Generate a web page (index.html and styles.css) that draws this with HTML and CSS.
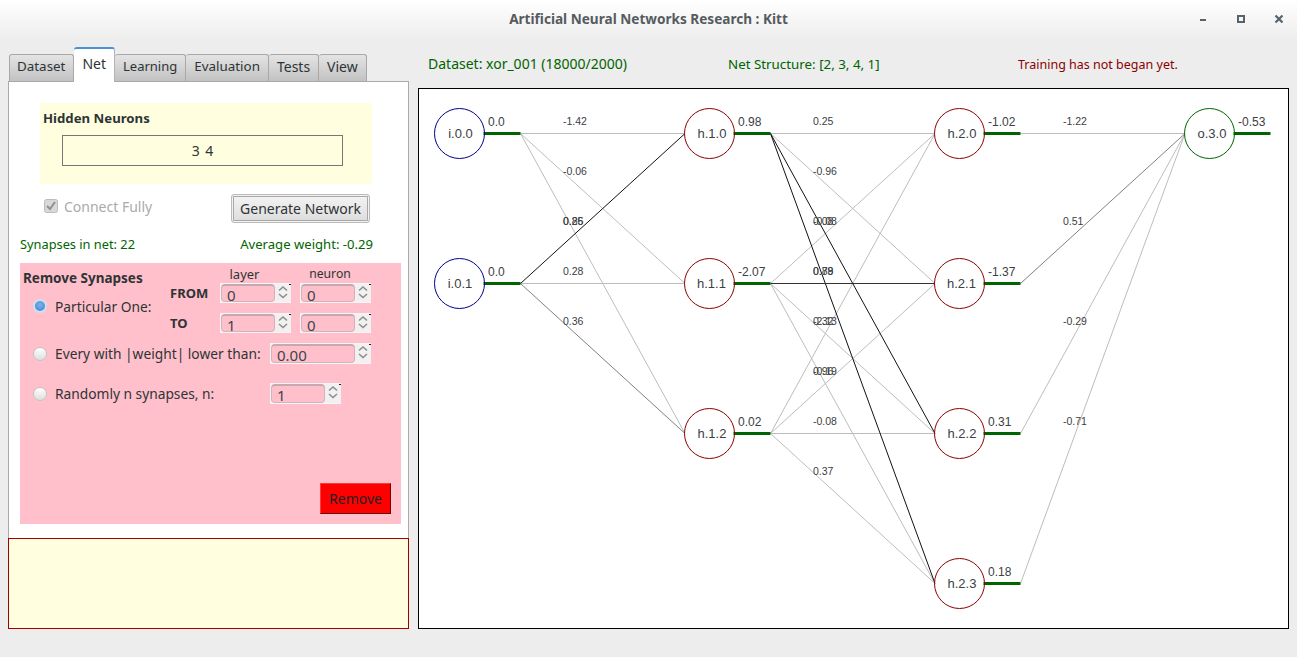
FILE: index.html
```html
<!DOCTYPE html>
<html>
<head>
  <title>Artificial Neural Networks Research : Kitt</title>
  <link rel="stylesheet" href="styles.css">
</head>
<body>

  <header class="titlebar">
    <span></span>
    <h1>Artificial Neural Networks Research : Kitt</h1>
    <div class="winbtns">
      <svg width="8" height="8" viewBox="0 0 8 8"><rect x="0" y="5" width="6" height="2"/></svg>
      <svg width="10" height="10" viewBox="0 0 10 10"><path d="M1 1h8v8H1z M3 3v4h4V3z" fill-rule="evenodd"/></svg>
      <svg width="10" height="10" viewBox="0 0 10 10"><path d="M1.5 1.5l7 7M8.5 1.5l-7 7" stroke-width="2.2" class="x"/></svg>
    </div>
  </header>

  <main class="main">
    <section class="leftcol">
      <nav class="tabs">
        <div class="tab tab-dataset">Dataset</div>
        <div class="tab active">Net</div>
        <div class="tab tab-learning">Learning</div>
        <div class="tab tab-eval">Evaluation</div>
        <div class="tab">Tests</div>
        <div class="tab">View</div>
      </nav>

      <div class="pane">
        <div class="hidden-box">
          <div class="hidden-title">Hidden Neurons</div>
          <div class="hidden-input">3 4</div>
        </div>

        <div class="gen-row">
          <div class="check">
            <svg width="14" height="14" viewBox="0 0 14 14"><rect x="0.5" y="0.5" width="13" height="13" rx="2" fill="#d8d8d8" stroke="#bbb"/><path d="M3 7l3 3 5-7" fill="none" stroke="#8f8f8f" stroke-width="2"/></svg>
            <span>Connect Fully</span>
          </div>
          <button class="gen-btn">Generate Network</button>
        </div>

        <div class="stats-row">
          <span>Synapses in net: 22</span>
          <span class="avg">Average weight: -0.29</span>
        </div>

        <div class="remove-box">
          <div class="particular">
            <div class="remove-title">Remove Synapses</div>
            <div class="colhead hd-layer">layer</div>
            <div class="colhead hd-neuron">neuron</div>
            <label class="opt opt-one"><span class="radio on"></span>Particular One:</label>
            <div class="fromto">FROM</div>
            <div class="spin"><div class="field">0</div><div class="arrows"><svg width="12" height="16" viewBox="0 0 12 16"><path d="M2 6.5l4-3.5 4 3.5M2 10l4 3.5 4-3.5"/></svg></div></div>
            <div class="spin second"><div class="field">0</div><div class="arrows"><svg width="12" height="16" viewBox="0 0 12 16"><path d="M2 6.5l4-3.5 4 3.5M2 10l4 3.5 4-3.5"/></svg></div></div>
            <div class="fromto to-row">TO</div>
            <div class="spin to-row"><div class="field">1</div><div class="arrows"><svg width="12" height="16" viewBox="0 0 12 16"><path d="M2 6.5l4-3.5 4 3.5M2 10l4 3.5 4-3.5"/></svg></div></div>
            <div class="spin second to-row"><div class="field">0</div><div class="arrows"><svg width="12" height="16" viewBox="0 0 12 16"><path d="M2 6.5l4-3.5 4 3.5M2 10l4 3.5 4-3.5"/></svg></div></div>
          </div>

          <div class="opt-row every">
            <label class="opt"><span class="radio"></span>Every with |weight| lower than:</label>
            <div class="spin wide"><div class="field">0.00</div><div class="arrows"><svg width="12" height="16" viewBox="0 0 12 16"><path d="M2 6.5l4-3.5 4 3.5M2 10l4 3.5 4-3.5"/></svg></div></div>
          </div>

          <div class="opt-row random">
            <label class="opt"><span class="radio"></span>Randomly n synapses, n:</label>
            <div class="spin wide-h"><div class="field">1</div><div class="arrows"><svg width="12" height="16" viewBox="0 0 12 16"><path d="M2 6.5l4-3.5 4 3.5M2 10l4 3.5 4-3.5"/></svg></div></div>
          </div>

          <button class="remove-btn">Remove</button>
        </div>
      </div>

      <div class="console"></div>
    </section>

    <section class="rightcol">
      <div class="info-row">
        <span class="info-data">Dataset: xor_001 (18000/2000)</span>
        <span class="info-net">Net Structure: [2, 3, 4, 1]</span>
        <span class="info-train">Training has not began yet.</span>
      </div>

      <div class="canvas">
        <svg class="net" width="869" height="539" viewBox="419 89 869 539">
          <g class="edges">
            <line x1="520.5" y1="133.5" x2="685" y2="133.5"/>
            <line x1="520.5" y1="133.5" x2="685" y2="283.5"/>
            <line x1="520.5" y1="133.5" x2="685" y2="433.5"/>
            <line x1="520.5" y1="283.5" x2="685" y2="283.5"/>
            <line x1="770.5" y1="133.5" x2="935" y2="133.5"/>
            <line x1="770.5" y1="133.5" x2="935" y2="283.5"/>
            <line x1="770.5" y1="283.5" x2="935" y2="133.5"/>
            <line x1="770.5" y1="283.5" x2="935" y2="433.5"/>
            <line x1="770.5" y1="283.5" x2="935" y2="583.5"/>
            <line x1="770.5" y1="433.5" x2="935" y2="133.5"/>
            <line x1="770.5" y1="433.5" x2="935" y2="283.5"/>
            <line x1="770.5" y1="433.5" x2="935" y2="433.5"/>
            <line x1="770.5" y1="433.5" x2="935" y2="583.5"/>
            <line x1="1020.5" y1="133.5" x2="1185" y2="133.5"/>
            <line x1="1020.5" y1="433.5" x2="1185" y2="133.5"/>
            <line x1="1020.5" y1="583.5" x2="1185" y2="133.5"/>
            <line class="mid" x1="520.5" y1="283.5" x2="685" y2="433.5"/>
            <line class="mid" x1="1020.5" y1="283.5" x2="1185" y2="133.5"/>
            <line class="dark" x1="520.5" y1="283.5" x2="685" y2="133.5"/>
            <line class="dark" x1="770.5" y1="133.5" x2="935" y2="433.5"/>
            <line class="dark" x1="770.5" y1="133.5" x2="935" y2="583.5"/>
            <line class="dark2" x1="770.5" y1="283.5" x2="935" y2="283.5"/>
          </g>

          <g class="weights">
            <text x="563" y="125">-1.42</text>
            <text x="563" y="175">-0.06</text>
            <text x="563" y="225">0.85</text>
            <text x="563" y="225">0.26</text>
            <text x="563" y="275">0.28</text>
            <text x="563" y="325">0.36</text>
            <text x="813" y="125">0.25</text>
            <text x="813" y="175">-0.96</text>
            <text x="813" y="225">-0.08</text>
            <text x="813" y="225">0.08</text>
            <text x="813" y="275">0.89</text>
            <text x="813" y="275">0.78</text>
            <text x="813" y="325">-2.13</text>
            <text x="813" y="325">0.32</text>
            <text x="813" y="375">-0.19</text>
            <text x="813" y="375">0.96</text>
            <text x="813" y="425">-0.08</text>
            <text x="813" y="475">0.37</text>
            <text x="1063" y="125">-1.22</text>
            <text x="1063" y="225">0.51</text>
            <text x="1063" y="325">-0.29</text>
            <text x="1063" y="425">-0.71</text>
          </g>

          <g class="bars">
            <line x1="483.5" y1="133.5" x2="520.5" y2="133.5"/>
            <line x1="483.5" y1="283.5" x2="520.5" y2="283.5"/>
            <line x1="733.5" y1="133.5" x2="770.5" y2="133.5"/>
            <line x1="733.5" y1="283.5" x2="770.5" y2="283.5"/>
            <line x1="733.5" y1="433.5" x2="770.5" y2="433.5"/>
            <line x1="983.5" y1="133.5" x2="1020.5" y2="133.5"/>
            <line x1="983.5" y1="283.5" x2="1020.5" y2="283.5"/>
            <line x1="983.5" y1="433.5" x2="1020.5" y2="433.5"/>
            <line x1="983.5" y1="583.5" x2="1020.5" y2="583.5"/>
            <line x1="1233.5" y1="133.5" x2="1270.5" y2="133.5"/>
          </g>

          <g class="nodes input">
            <circle cx="459.5" cy="133.5" r="25"/>
            <circle cx="459.5" cy="283.5" r="25"/>
          </g>
          <g class="nodes hidden">
            <circle cx="709.5" cy="133.5" r="25"/>
            <circle cx="709.5" cy="283.5" r="25"/>
            <circle cx="709.5" cy="433.5" r="25"/>
            <circle cx="959.5" cy="133.5" r="25"/>
            <circle cx="959.5" cy="283.5" r="25"/>
            <circle cx="959.5" cy="433.5" r="25"/>
            <circle cx="959.5" cy="583.5" r="25"/>
          </g>
          <g class="nodes output">
            <circle cx="1209.5" cy="133.5" r="25"/>
          </g>

          <g class="names">
            <text x="460.5" y="138">i.0.0</text>
            <text x="460" y="288">i.0.1</text>
            <text x="712" y="138">h.1.0</text>
            <text x="711.5" y="288">h.1.1</text>
            <text x="712" y="438">h.1.2</text>
            <text x="962" y="138">h.2.0</text>
            <text x="961.5" y="288">h.2.1</text>
            <text x="962" y="438">h.2.2</text>
            <text x="962" y="588">h.2.3</text>
            <text x="1212" y="138">o.3.0</text>
          </g>

          <g class="values">
            <text x="488" y="126">0.0</text>
            <text x="488" y="276">0.0</text>
            <text x="738" y="126">0.98</text>
            <text x="738" y="276">-2.07</text>
            <text x="738" y="426">0.02</text>
            <text x="988" y="126">-1.02</text>
            <text x="988" y="276">-1.37</text>
            <text x="988" y="426">0.31</text>
            <text x="988" y="576">0.18</text>
            <text x="1238" y="126">-0.53</text>
          </g>
        </svg>
      </div>
    </section>
  </main>

</body>
</html>
```

FILE: styles.css
```css
html, body {
  margin: 0;
  padding: 0;
}

body {
  width: 1297px;
  height: 657px;
  overflow: hidden;
  background: #ededed;
  font-family: "Noto Sans", sans-serif;
  font-size: 14px;
  color: #2e3436;
}

.titlebar {
  height: 48px;
  display: grid;
  grid-template-columns: 1fr auto 1fr;
  align-items: start;
  background: linear-gradient(#ffffff, #ededed 40px);
}

.titlebar h1 {
  margin: 10px 0 0;
  font-size: 13.6px;
  line-height: 18px;
  font-weight: bold;
  color: #555b60;
}

.winbtns {
  display: flex;
  justify-content: flex-end;
  gap: 28px;
  padding: 14px 13px 0 0;
}

.winbtns svg {
  fill: #56656c;
  stroke: none;
}

.winbtns .x {
  stroke: #56656c;
  fill: none;
}

.main {
  display: flex;
  gap: 9px;
  padding-left: 8px;
}

.leftcol {
  width: 401px;
}

.tabs {
  display: flex;
  align-items: flex-end;
  height: 33px;
  padding-left: 1px;
}

.tab {
  height: 26px;
  line-height: 23px;
  padding: 0 8px;
  background: linear-gradient(#e4e4e4, #c2c2c2);
  border: 1px solid #a8a8a8;
  border-bottom: none;
  border-left-width: 0;
  border-radius: 3px 3px 0 0;
}

.tab:first-child {
  border-left-width: 1px;
}

.tab-dataset {
  font-size: 13.4px;
  padding: 0 8px 0 7px;
}

.tab-learning {
  font-size: 13px;
}

.tab-eval {
  font-size: 13.4px;
}

.tab.active {
  height: 33px;
  line-height: 30px;
  margin-bottom: -1px;
  position: relative;
  background: #fff;
  border: 1px solid #b4b4b4;
  border-top: 2px solid #4a90d9;
  border-bottom: none;
  border-left-width: 0;
}

.pane {
  box-sizing: border-box;
  height: 457px;
  background: #fff;
  border: 1px solid #aaa;
  border-bottom: none;
  padding-top: 21px;
}

.hidden-box {
  box-sizing: border-box;
  width: 332px;
  height: 81px;
  margin-left: 31px;
  padding: 3px;
  background: #ffffe0;
}

.hidden-title {
  height: 24px;
  line-height: 24px;
  font-size: 13.2px;
  font-weight: bold;
}

.hidden-input {
  box-sizing: border-box;
  width: 281px;
  height: 31px;
  margin: 5px 0 0 19px;
  line-height: 29px;
  text-align: center;
  word-spacing: 2px;
  border: 1px solid #777;
}

.gen-row {
  display: flex;
  justify-content: space-between;
  align-items: flex-start;
  width: 326px;
  height: 30px;
  margin: 10px 0 0 35px;
}

.check {
  display: flex;
  align-items: center;
  gap: 6px;
  height: 24px;
  color: #a9abab;
}

.gen-btn {
  box-sizing: border-box;
  width: 139px;
  height: 29px;
  padding: 0;
  font: inherit;
  color: inherit;
  background: linear-gradient(#f4f4f4, #dcdcdc);
  border: 1px solid #bbb;
  border-radius: 3px;
  box-shadow: inset 0 0 0 1px #f2f2f2, inset 0 0 0 2px #a8a8a8;
}

.stats-row {
  display: flex;
  justify-content: space-between;
  width: 353px;
  height: 20px;
  line-height: 20px;
  margin: 10px 0 0 11px;
  font-size: 12.8px;
  color: #006400;
}

.stats-row .avg {
  font-size: 13.1px;
}

.remove-box {
  box-sizing: border-box;
  display: flex;
  flex-direction: column;
  width: 381px;
  height: 261px;
  margin: 9px 0 0 11px;
  padding-left: 3px;
  background: #ffc0cb;
}

.particular {
  display: grid;
  grid-template-columns: 147px 50px 71px 80px;
  grid-template-rows: 20px 20px 30px;
}

.remove-title {
  grid-column: 1 / 3;
  font-size: 13.5px;
  font-weight: bold;
  line-height: 30px;
}

.colhead {
  font-size: 13px;
  line-height: 20px;
  padding-top: 1px;
  text-align: center;
}

.hd-layer {
  grid-column: 3;
  width: 49px;
}

.hd-neuron {
  grid-column: 4;
  width: 60px;
  margin-left: 9px;
  font-size: 12.2px;
}

.opt-one {
  grid-row: 2 / 4;
  grid-column: 1;
  align-self: start;
  margin-top: 13px;
}

.opt {
  display: flex;
  align-items: center;
  gap: 8px;
  height: 20px;
  padding-left: 10px;
  font-size: 13.75px;
}

.radio {
  box-sizing: border-box;
  width: 14px;
  height: 14px;
  border: 1px solid #c4c4c4;
  border-radius: 50%;
  background: linear-gradient(#ffffff, #dedede);
}

.radio.on {
  border: 2px solid #d0e0ef;
  background: radial-gradient(circle at 50% 40%, #7fb2ea, #3a7fd0);
}

.fromto {
  font-size: 13px;
  font-weight: bold;
  line-height: 20px;
}

.to-row {
  align-self: end;
}

.spin {
  box-sizing: border-box;
  display: flex;
  width: 71px;
  height: 20px;
  padding: 1px 0 1px 1px;
  background: #f6f4f4;
}

.spin.second {
  margin-left: 9px;
}

.spin.wide {
  width: 101px;
  height: 21px;
}

.spin.wide-h {
  height: 21px;
}

.field {
  box-sizing: border-box;
  flex: 1;
  padding-left: 5px;
  font-size: 15px;
  line-height: 19px;
  color: #3d4447;
  background: #ffc0cb;
  border: 1px solid #d0b4ba;
  border-top: 2px solid #c4aab0;
  border-radius: 4px;
}

.arrows {
  width: 16px;
  display: flex;
  justify-content: center;
  background: linear-gradient(#1e1e1e, #1e1e1e) top right / 2px 1px no-repeat, #f2f0f0;
}

.arrows svg {
  fill: none;
  stroke: #8a8f90;
  stroke-width: 1.6;
}

.opt-row {
  display: flex;
  align-items: center;
  height: 21px;
}

.opt-row .opt {
  width: 237px;
}

.every {
  margin-top: 10px;
}

.random {
  margin-top: 19px;
}

.remove-btn {
  box-sizing: border-box;
  align-self: flex-end;
  width: 71px;
  height: 31px;
  margin: auto 10px 10px 0;
  padding: 0;
  font: inherit;
  color: #222;
  background: #ff0000;
  border: 1px solid;
  border-color: #ff3a3a #700000 #700000 #ff3a3a;
}

.console {
  box-sizing: border-box;
  height: 91px;
  background: #ffffe0;
  border: 1px solid #a00000;
}

.rightcol {
  width: 871px;
}

.info-row {
  display: flex;
  height: 32px;
  margin-bottom: 8px;
  padding: 6px 0 0 10px;
  box-sizing: border-box;
  line-height: 20px;
}

.info-data {
  width: 300px;
  color: #006400;
}

.info-net {
  width: 290px;
  font-size: 13.35px;
  color: #006400;
}

.info-train {
  padding-top: 1px;
  font-size: 12.5px;
  color: #8b0000;
}

.canvas {
  box-sizing: border-box;
  height: 541px;
  background: #fff;
  border: 1px solid #000;
}

.net {
  display: block;
  font-family: "Liberation Sans", Arial, sans-serif;
}

.edges line {
  stroke: #bdbdbd;
  stroke-width: 1;
}

.edges .mid {
  stroke: #808080;
}

.edges .dark {
  stroke: #111;
}

.edges .dark2 {
  stroke: #333;
}

.weights text {
  font-size: 10.5px;
  fill: #3c4043;
}

.bars line {
  stroke: #006400;
  stroke-width: 3;
}

.nodes circle {
  fill: none;
  stroke-width: 1;
}

.input circle {
  stroke: #00008b;
}

.hidden circle {
  stroke: #8b0000;
}

.output circle {
  stroke: #006400;
}

.names text {
  font-size: 13px;
  text-anchor: middle;
  fill: #3c4043;
}

.values text {
  font-size: 12px;
  fill: #3c4043;
}
```
